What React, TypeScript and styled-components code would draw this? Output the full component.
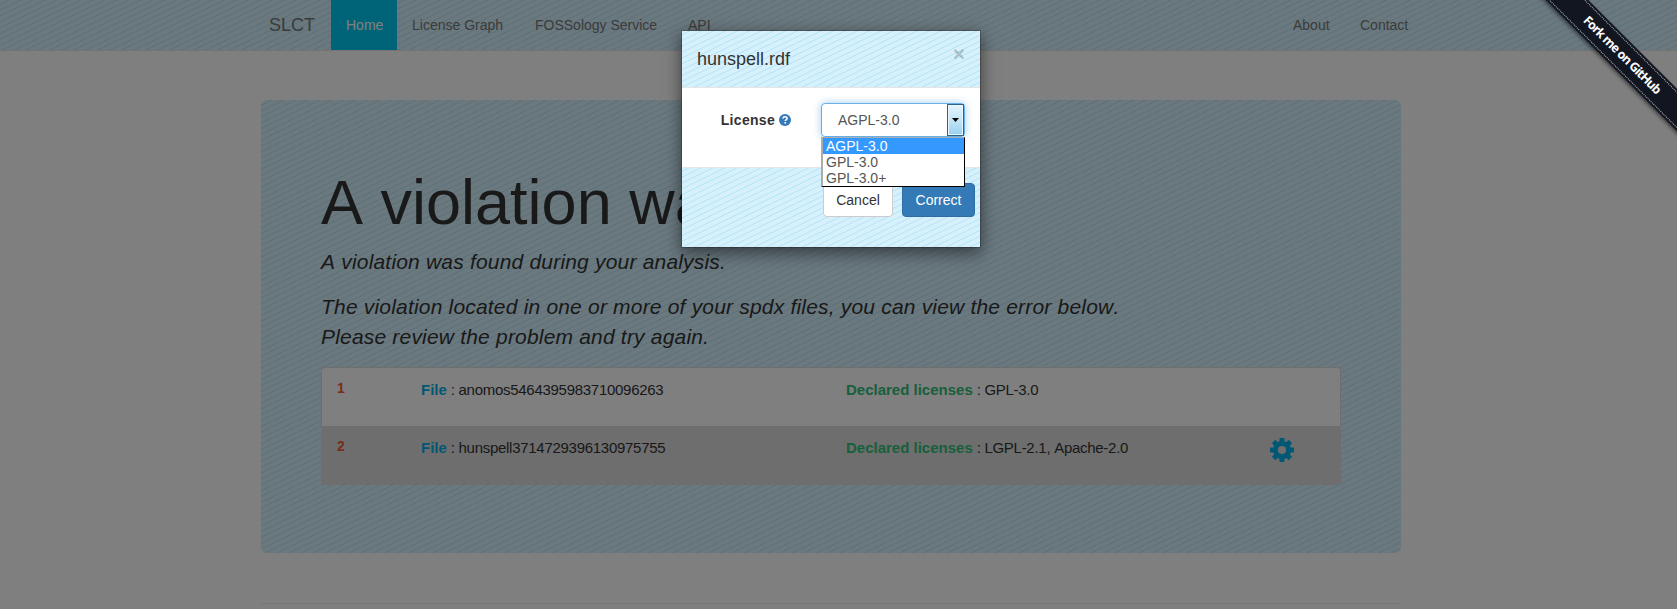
import React from 'react';
import styled, { createGlobalStyle, css } from 'styled-components';

const GlobalStyle = createGlobalStyle`
  * { box-sizing: border-box; }
  html, body { margin: 0; height: 100%; overflow: hidden; background: #fff; }
  body {
    font: 14px/20px "Liberation Sans", Arial, sans-serif;
    font-kerning: none;
    color: #333;
  }
`;

const stripes = css`
  background-color: #d7f1fc;
  background-image: repeating-linear-gradient(
    -26deg,
    #d7f1fc 0, #d7f1fc 3.7px,
    #b6e5f9 4.2px, #b6e5f9 4.7px,
    #d7f1fc 5.2px, #d7f1fc 5.25px
  );
`;

const Page = styled.div`
  height: 609px;
  overflow: hidden;
`;

const Navbar = styled.nav`
  ${stripes}
  height: 51px;
  border-bottom: 1px solid #e7e7e7;
`;

const NavInner = styled.div`
  display: flex;
  width: 1170px;
  margin-left: 254px;
`;

const Brand = styled.a`
  width: 77px;
  padding: 15px;
  font-size: 18px;
  color: #777;
`;

const NavLink = styled.a<{ $active?: boolean; $width: number }>`
  width: ${(p) => p.$width}px;
  height: 50px;
  padding: 15px 0 15px 15px;
  color: ${(p) => (p.$active ? '#fff' : '#777')};
  background: ${(p) => (p.$active ? '#00c8f0' : 'transparent')};
  white-space: nowrap;
`;

const Spacer = styled.div`
  flex: 1;
`;

const Main = styled.main`
  width: 1140px;
  margin: 49px 0 0 261px;
`;

const Jumbotron = styled.section`
  ${stripes}
  height: 453px;
  padding: 68px 60px 48px;
  border-radius: 6px;
`;

const Heading = styled.h1`
  margin: 0 0 10px;
  font-size: 63px;
  line-height: 69.3px;
  font-weight: 500;
  white-space: nowrap;
`;

const Lead = styled.p`
  margin: 0 0 15px;
  font-size: 21px;
  line-height: 30px;
  font-style: italic;
  letter-spacing: 0.19px;
`;

const List = styled.div`
  width: 1020px;
`;

const Row = styled.div<{ $shaded?: boolean }>`
  display: grid;
  grid-template-columns: 84px 425px 424px 1fr;
  height: 59px;
  padding: ${(p) => (p.$shaded ? 9 : 10)}px 15px;
  border: 1px solid #ddd;
  border-bottom: 0;
  background: ${(p) => (p.$shaded ? '#dcdcdc' : '#fff')};
  border-radius: ${(p) => (p.$shaded ? '0 0 4px 4px' : '4px 4px 0 0')};
  font-size: 15px;
  line-height: 23px;
`;

const Index = styled.b`
  font-size: 14px;
  line-height: 20px;
  color: #f05a32;
`;

const Cell = styled.span`
  letter-spacing: -0.28px;
  white-space: nowrap;
`;

const Key = styled.b<{ $color: string }>`
  color: ${(p) => p.$color};
  letter-spacing: 0;
`;

const GearBox = styled.span`
  display: flex;
  padding-top: 2px;
`;

const Rule = styled.hr`
  margin: 50px 0 0;
  border: 0;
  border-top: 1px solid #eee;
`;

const Backdrop = styled.div`
  position: absolute;
  inset: 0;
  background: rgba(0, 0, 0, 0.5);
`;

const Overlay = styled.div`
  position: absolute;
  inset: 0;
  overflow: hidden;
`;

const Modal = styled.div`
  width: 300px;
  margin: 30px 0 0 681px;
  border: 1px solid rgba(0, 0, 0, 0.2);
  background: #fff;
  background-clip: padding-box;
  box-shadow: 0 5px 15px rgba(0, 0, 0, 0.5);
`;

const ModalHeader = styled.header`
  ${stripes}
  display: flex;
  justify-content: space-between;
  height: 57px;
  padding: 15px;
  border-bottom: 1px solid #e5e5e5;
`;

const ModalTitle = styled.h4`
  margin: 0;
  font-size: 18px;
  line-height: 26px;
  font-weight: 500;
`;

const Close = styled.span`
  margin-top: -3px;
  font-size: 21px;
  line-height: 21px;
  font-weight: bold;
  color: #000;
  opacity: 0.2;
`;

const ModalBody = styled.div`
  display: flex;
  height: 79px;
  padding: 15px;
`;

const Label = styled.label`
  display: flex;
  align-items: center;
  width: 94px;
  height: 34px;
  margin-right: 30px;
  justify-content: flex-end;
  gap: 4px;
  font-weight: bold;
  letter-spacing: 0.3px;
`;

const SelectWrap = styled.div`
  position: relative;
  width: 144px;
`;

const Select = styled.div`
  display: flex;
  justify-content: space-between;
  height: 34px;
  padding-left: 16px;
  border: 1px solid #66afe9;
  border-radius: 4px;
  background: #fff;
  color: #555;
  line-height: 32px;
  box-shadow: 0 0 8px rgba(102, 175, 233, 0.6);
`;

const Arrow = styled.span`
  display: flex;
  align-items: center;
  justify-content: center;
  width: 17px;
  height: 32px;
  border: 1px solid #2c628b;
  background: linear-gradient(#e5f4fc 0, #c4e5f6 50%, #98d1ef 100%);
  box-shadow: inset 0 0 0 1px #e8f6fd;
`;

const Options = styled.div`
  position: absolute;
  z-index: 2;
  top: 34px;
  left: 0;
  width: 144px;
  height: 50px;
  border: 1px solid #000;
  border-left: 2px solid #acacac;
  border-top-color: #acacac;
  background: #fff;
`;

const Option = styled.div<{ $selected?: boolean }>`
  height: 16px;
  padding-left: 3px;
  line-height: 17px;
  color: ${(p) => (p.$selected ? '#fff' : '#555')};
  background: ${(p) => (p.$selected ? '#3399ff' : 'transparent')};
`;

const ModalFooter = styled.footer`
  ${stripes}
  display: flex;
  justify-content: flex-end;
  gap: 9px;
  height: 80px;
  padding: 15px 5px 15px 15px;
  border-top: 1px solid #e5e5e5;
`;

const Button = styled.button<{ $primary?: boolean }>`
  height: 34px;
  width: ${(p) => (p.$primary ? 73 : 70)}px;
  padding: 0;
  border: 1px solid ${(p) => (p.$primary ? '#2e6da4' : '#ccc')};
  border-radius: 4px;
  background: ${(p) => (p.$primary ? '#337ab7' : '#fff')};
  color: ${(p) => (p.$primary ? '#fff' : '#333')};
  font: 14px/20px "Liberation Sans", Arial, sans-serif;
`;

const RibbonClip = styled.div`
  position: absolute;
  top: 0;
  right: 0;
  width: 150px;
  height: 150px;
  overflow: hidden;
`;

const Ribbon = styled.a`
  position: absolute;
  top: 40px;
  right: -55px;
  display: flex;
  width: 220px;
  height: 30px;
  padding: 2px 0;
  background: #121621;
  box-shadow: 0 2px 4px rgba(0, 0, 0, 0.5);
  transform: rotate(45deg);
`;

const RibbonText = styled.span`
  flex: 1;
  height: 26px;
  border: dotted rgba(255, 255, 255, 0.7);
  border-width: 1px 0;
  color: #fff;
  font: bold 12.5px/24px "Open Sans", "Noto Sans", sans-serif;
  letter-spacing: -0.8px;
  text-align: center;
`;

const Gear = () => (
  <svg width="24" height="24" viewBox="-12 -12 24 24">
    <g fill="#00b0e8">
      {[0, 45, 90, 135].map((a) => (
        <rect key={a} x="-2.5" y="-12" width="5" height="24" rx="0.8" transform={`rotate(${a})`} />
      ))}
    </g>
    <circle r="6.6" fill="none" stroke="#00b0e8" strokeWidth="5" />
    <circle r="4.1" fill="#dcdcdc" />
  </svg>
);

const Help = () => (
  <svg width="12" height="12" viewBox="0 0 12 12">
    <circle cx="6" cy="6" r="6" fill="#337ab7" />
    <path d="M4 4.6C4 3.2 4.8 2.7 6 2.7S8.1 3.4 8.1 4.4C8.1 5.5 6.3 5.6 6.3 7.1" fill="none" stroke="#fff" strokeWidth="1.6" />
    <rect x="5.4" y="8" width="1.7" height="1.6" fill="#fff" />
  </svg>
);

const rows = [
  { file: 'anomos5464395983710096263', licenses: 'GPL-3.0', fixable: false },
  { file: 'hunspell3714729396130975755', licenses: 'LGPL-2.1, Apache-2.0', fixable: true },
];

export default function App() {
  return (
    <>
      <GlobalStyle />
      <Page>
        <Navbar>
          <NavInner>
            <Brand>SLCT</Brand>
            <NavLink $active $width={66}>Home</NavLink>
            <NavLink $width={123}>License Graph</NavLink>
            <NavLink $width={153}>FOSSology Service</NavLink>
            <NavLink $width={55}>API</NavLink>
            <Spacer />
            <NavLink $width={67}>About</NavLink>
            <NavLink $width={79}>Contact</NavLink>
          </NavInner>
        </Navbar>
        <Main>
          <Jumbotron>
            <Heading>A violation was found</Heading>
            <Lead>A violation was found during your analysis.</Lead>
            <Lead>
              The violation located in one or more of your spdx files, you can view the error below.
              <br />
              Please review the problem and try again.
            </Lead>
            <List>
              {rows.map((row, i) => (
                <Row key={row.file} $shaded={row.fixable}>
                  <Index>{i + 1}</Index>
                  <Cell>
                    <Key $color="#00b0e8">File</Key> : {row.file}
                  </Cell>
                  <Cell>
                    <Key $color="#30c078">Declared licenses</Key> : {row.licenses}
                  </Cell>
                  {row.fixable && (
                    <GearBox>
                      <Gear />
                    </GearBox>
                  )}
                </Row>
              ))}
            </List>
          </Jumbotron>
          <Rule />
        </Main>
      </Page>
      <Backdrop />
      <Overlay>
        <Modal>
          <ModalHeader>
            <ModalTitle>hunspell.rdf</ModalTitle>
            <Close>×</Close>
          </ModalHeader>
          <ModalBody>
            <Label>
              License <Help />
            </Label>
            <SelectWrap>
              <Select>
                AGPL-3.0
                <Arrow>
                  <svg width="7" height="4" viewBox="0 0 7 4">
                    <path d="M0 0h7L3.5 4z" fill="#000" />
                  </svg>
                </Arrow>
              </Select>
              <Options>
                <Option $selected>AGPL-3.0</Option>
                <Option>GPL-3.0</Option>
                <Option>GPL-3.0+</Option>
              </Options>
            </SelectWrap>
          </ModalBody>
          <ModalFooter>
            <Button>Cancel</Button>
            <Button $primary>Correct</Button>
          </ModalFooter>
        </Modal>
      </Overlay>
      <RibbonClip>
        <Ribbon>
          <RibbonText>Fork me on GitHub</RibbonText>
        </Ribbon>
      </RibbonClip>
    </>
  );
}
